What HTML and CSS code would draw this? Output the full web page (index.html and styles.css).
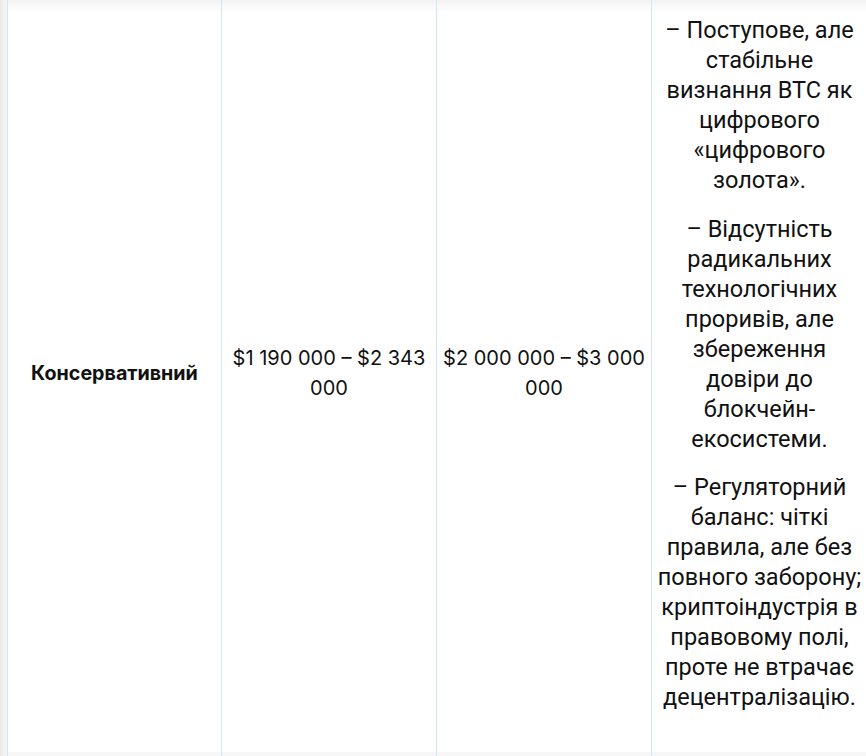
FILE: index.html
```html
<!DOCTYPE html>
<html lang="uk">
<head>
<meta charset="utf-8">
<link rel="stylesheet" href="styles.css">
</head>
<body>
<div class="page">
  <div class="edge"></div>
  <table class="grid">
    <colgroup>
      <col class="c1"><col class="c2"><col class="c3"><col class="c4">
    </colgroup>
    <tbody>
      <tr class="row">
        <td class="cell name">Консервативний</td>
        <td class="cell val">$1 190 000 – $2 343 000</td>
        <td class="cell val">$2 000 000 – $3 000 000</td>
        <td class="cell desc">
          <p>– Поступове, але стабільне визнання BTC як цифрового «цифрового золота».</p>
          <p>– Відсутність радикальних технологічних проривів, але збереження довіри до блокчейн-екосистеми.</p>
          <p>– Регуляторний баланс: чіткі правила, але без повного заборону; криптоіндустрія в правовому полі, проте не втрачає децентралізацію.</p>
        </td>
      </tr>
      <tr class="next">
        <td class="cell"></td><td class="cell"></td><td class="cell"></td><td class="cell"></td>
      </tr>
    </tbody>
  </table>
</div>
</body>
</html>
```

FILE: styles.css
```css
html, body {
  margin: 0;
  padding: 0;
  background: #ffffff;
}
body {
  width: 866px;
  height: 756px;
  overflow: hidden;
  font-family: Inter, "Noto Sans", sans-serif;
  color: #111111;
}
.page {
  display: flex;
  height: 756px;
  background: linear-gradient(to bottom, #f3f3f3 0, #ffffff 13px);
}
.edge {
  flex: 0 0 7px;
  background: linear-gradient(to right, #e9e9e9, #f6f6f6);
}
.grid {
  border-collapse: collapse;
  table-layout: fixed;
  width: 860px;
  flex: 0 0 860px;
}
.c1 { width: 214px; }
.c2 { width: 215px; }
.c3 { width: 215px; }
.c4 { width: 216px; }
.cell {
  border-left: 1px solid #d2e6f3;
  border-right: 1px solid #d2e6f3;
  text-align: center;
  padding: 0 6px;
  font-size: 20px;
  line-height: 30px;
}
.row .cell {
  height: 752px;
  box-sizing: border-box;
}
.name, .val {
  vertical-align: middle;
  padding-bottom: 7px;
}
.name {
  font-weight: 700;
  font-size: 19.7px;
}
.desc {
  vertical-align: top;
  font-family: Roboto, "Liberation Sans", sans-serif;
  font-size: 23.5px;
  padding: 15px 4px 38px 4px;
}
.desc p {
  margin: 0 0 18.5px 0;
}
.desc p:last-child {
  margin-bottom: 0;
}
.next .cell {
  height: 20px;
  background: #f7f7f7;
}
```
